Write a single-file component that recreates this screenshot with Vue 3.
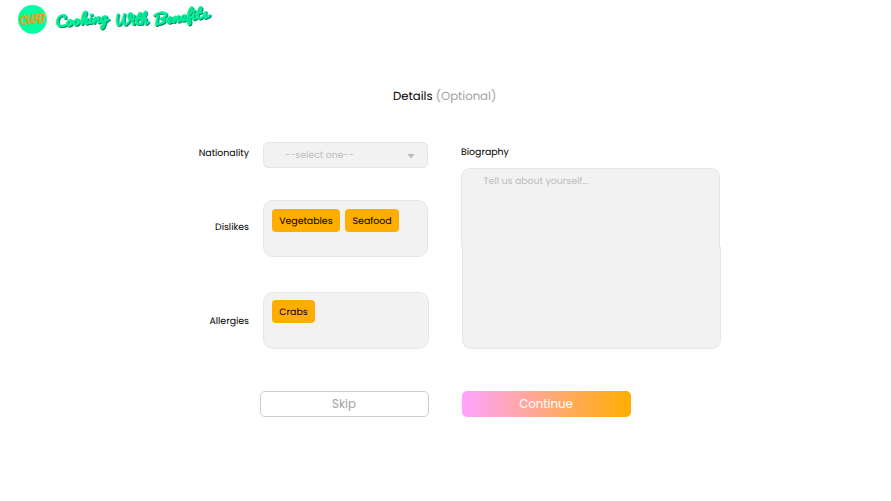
<script setup>
import { ref } from 'vue'

const dislikes = ref(['Vegetables', 'Seafood'])
const allergies = ref(['Crabs'])
</script>

<template>
  <div class="page">
    <header class="header">
      <svg class="logo" width="220" height="40" viewBox="0 0 220 40" role="img" aria-label="Cooking With Benefits">
        <circle cx="32.5" cy="19.3" r="14.4" fill="#00ffa0" />
        <g class="script">
          <text class="mono shade" transform="translate(20.1 25.3) rotate(-6) skewX(-6)" textLength="25" lengthAdjust="spacingAndGlyphs">CWB</text>
          <text class="mono" transform="translate(19.6 24.8) rotate(-6) skewX(-6)" textLength="25" lengthAdjust="spacingAndGlyphs">CWB</text>
          <g class="word shade" transform="translate(1 1)">
            <text transform="translate(55 27.6) rotate(-6) skewX(-6)" textLength="53" lengthAdjust="spacingAndGlyphs">Cooking</text>
            <text transform="translate(114 26) rotate(-3) skewX(-6)" textLength="33" lengthAdjust="spacingAndGlyphs">With</text>
            <text transform="translate(153.5 25.6) rotate(-8) skewX(-6)" textLength="55.5" lengthAdjust="spacingAndGlyphs">Benefits</text>
          </g>
          <g class="word">
            <text transform="translate(55 27.6) rotate(-6) skewX(-6)" textLength="53" lengthAdjust="spacingAndGlyphs">Cooking</text>
            <text transform="translate(114 26) rotate(-3) skewX(-6)" textLength="33" lengthAdjust="spacingAndGlyphs">With</text>
            <text transform="translate(153.5 25.6) rotate(-8) skewX(-6)" textLength="55.5" lengthAdjust="spacingAndGlyphs">Benefits</text>
          </g>
        </g>
      </svg>
    </header>

    <h1 class="title">Details <span>(Optional)</span></h1>

    <main class="form">
      <div class="fields">
        <div class="row nationality">
          <label>Nationality</label>
          <div class="select">
            <span>--select one--</span>
            <svg width="8" height="6" viewBox="0 0 8 6"><path d="M1.2 1h5.6q.7 0 .3.6L4.6 4.8q-.6.6-1.2 0L.9 1.6Q.5 1 1.2 1z" fill="#b8b8b8" /></svg>
          </div>
        </div>
        <div class="row dislikes">
          <label>Dislikes</label>
          <div class="box">
            <span v-for="item in dislikes" :key="item" class="tag" :class="item.toLowerCase()">{{ item }}</span>
          </div>
        </div>
        <div class="row allergies">
          <label>Allergies</label>
          <div class="box">
            <span v-for="item in allergies" :key="item" class="tag" :class="item.toLowerCase()">{{ item }}</span>
          </div>
        </div>
      </div>

      <div class="bio">
        <label>Biography</label>
        <div class="bio-top"><span>Tell us about yourself...</span></div>
        <div class="bio-bottom"></div>
      </div>
    </main>

    <footer class="actions">
      <button class="skip" type="button">Skip</button>
      <button class="continue" type="button">Continue</button>
    </footer>
  </div>
</template>

<style>
body {
  background: #fff;
}
</style>

<style scoped>
.page {
  box-sizing: border-box;
  width: 891px;
  height: 501px;
  overflow: hidden;
  background: #fff;
  color: #000;
  font-family: Poppins, Inter, sans-serif;
  font-size: 9.4px;
  text-rendering: geometricPrecision;
}
.page * {
  box-sizing: border-box;
}
.header {
  height: 40px;
}
.logo {
  display: block;
}
.script {
  font-family: Pacifico, "Kaushan Script", Lobster, "Dancing Script", Lato, sans-serif;
  font-weight: 400;
  font-variant-ligatures: none;
}
.mono {
  font-size: 11px;
  fill: #f0a81c;
  stroke: #f0a81c;
  stroke-width: 0.3px;
}
.mono.shade {
  fill: #a98f25;
  stroke: none;
}
.word {
  font-size: 14.5px;
  fill: #00ef9c;
  stroke: #00ef9c;
  stroke-width: 0.5px;
}
.word.shade {
  fill: #087e60;
  stroke: #087e60;
}
.title {
  height: 20px;
  margin: 47px 0 0 393px;
  font-size: 11.7px;
  font-weight: 400;
  line-height: 20px;
  white-space: pre;
}
.title span {
  color: #a3a3a3;
}
.form {
  display: flex;
  gap: 32px;
  height: 213px;
  margin: 35px 0 0 190px;
}
.fields {
  width: 239px;
}
.row {
  display: flex;
  justify-content: space-between;
}
.row label {
  width: 59px;
  text-align: right;
  line-height: 14px;
}
.nationality {
  height: 26px;
}
.nationality label {
  padding-top: 5px;
}
.select {
  display: flex;
  align-items: center;
  justify-content: space-between;
  width: 165px;
  height: 26px;
  margin-right: 1px;
  padding: 2px 12px 0 21px;
  border: 1px solid #e6e6e6;
  border-radius: 5px;
  background: #f2f2f2;
  color: #bdbdbd;
}
.box {
  display: flex;
  align-items: flex-start;
  gap: 5px;
  width: 166px;
  height: 57px;
  padding: 7px 8px;
  border: 1px solid #e6e6e6;
  border-radius: 10px;
  background: #f2f2f2;
}
.dislikes {
  margin-top: 32px;
}
.dislikes label {
  padding-top: 21px;
}
.dislikes .box {
  width: 165.3px;
  margin-right: 0.7px;
  padding: 8px 7.6px;
}
.allergies {
  margin-top: 35px;
}
.allergies label {
  padding-top: 23px;
}
.tag {
  height: 23.4px;
  border-radius: 4px;
  background: #ffae00;
  line-height: 26px;
  text-align: center;
}
.vegetables {
  width: 68.5px;
}
.seafood {
  width: 54px;
}
.crabs {
  width: 43px;
}
.bio {
  width: 260px;
}
.bio label {
  display: block;
  height: 26px;
  padding-top: 4px;
  line-height: 14px;
}
.bio-top,
.bio-bottom {
  width: 259px;
  border: 1px solid #e6e6e6;
  background: #f2f2f2;
}
.bio-top {
  height: 79px;
  padding: 6px 0 0 21.5px;
  border-bottom: 0;
  border-radius: 9px 9px 0 0;
  color: #bdbdbd;
  line-height: 14px;
}
.bio-bottom {
  height: 102px;
  margin-left: 1px;
  border-top: 0;
  border-radius: 0 0 9px 9px;
}
.actions {
  display: flex;
  gap: 33px;
  margin: 35.5px 0 0 259.5px;
}
.actions button {
  width: 169px;
  height: 26.5px;
  padding: 0;
  border-radius: 5px;
  font: 400 11.75px/24px Poppins, Inter, sans-serif;
}
.skip {
  border: 1px solid #cfcfcf;
  background: #fff;
  color: #a3a3a3;
}
.continue {
  border: 0;
  background: linear-gradient(90deg, #ffa3ff, #ffae00);
  color: #fff;
}
</style>
